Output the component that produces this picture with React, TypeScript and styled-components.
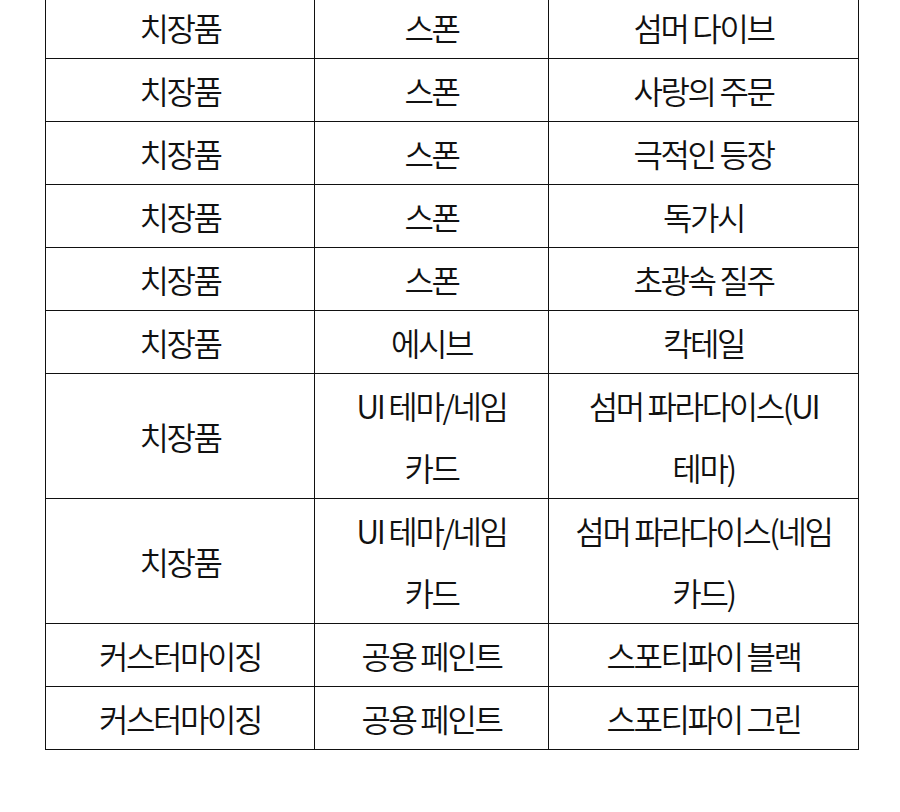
import { createGlobalStyle, styled } from 'styled-components'

const GlobalStyle = createGlobalStyle`
  html, body {
    margin: 0;
    padding: 0;
    background: #fff;
  }
  body {
    font-family: 'Noto Sans CJK KR', 'Noto Sans', sans-serif;
    color: #111;
  }
`

const Page = styled.div`
  width: 900px;
  padding: 0 0 64px 45px;
  margin-top: -5px;
  box-sizing: border-box;
`

const Table = styled.table`
  width: 813px;
  border-collapse: collapse;
  table-layout: fixed;
  border: 1px solid #111;
`

const Col = styled.col<{ $width: number }>`
  width: ${(p) => p.$width}px;
`

const Cell = styled.td`
  border: 1px solid #111;
  padding: 0 14px;
  text-align: center;
  vertical-align: middle;
  font-size: 32px;
  line-height: 62px;
  letter-spacing: -2.4px;
  font-weight: 350;
  word-break: keep-all;
`

const rows: [string, string, string][] = [
  ['치장품', '스폰', '섬머 다이브'],
  ['치장품', '스폰', '사랑의 주문'],
  ['치장품', '스폰', '극적인 등장'],
  ['치장품', '스폰', '독가시'],
  ['치장품', '스폰', '초광속 질주'],
  ['치장품', '에시브', '칵테일'],
  ['치장품', 'UI 테마/네임 카드', '섬머 파라다이스(UI 테마)'],
  ['치장품', 'UI 테마/네임 카드', '섬머 파라다이스(네임 카드)'],
  ['커스터마이징', '공용 페인트', '스포티파이 블랙'],
  ['커스터마이징', '공용 페인트', '스포티파이 그린'],
]

function App() {
  return (
    <Page>
      <GlobalStyle />
      <Table>
        <colgroup>
          <Col $width={269} />
          <Col $width={234} />
          <Col $width={310} />
        </colgroup>
        <tbody>
          {rows.map((row, i) => (
            <tr key={i}>
              {row.map((text, j) => (
                <Cell key={j}>{text}</Cell>
              ))}
            </tr>
          ))}
        </tbody>
      </Table>
    </Page>
  )
}

export default App
